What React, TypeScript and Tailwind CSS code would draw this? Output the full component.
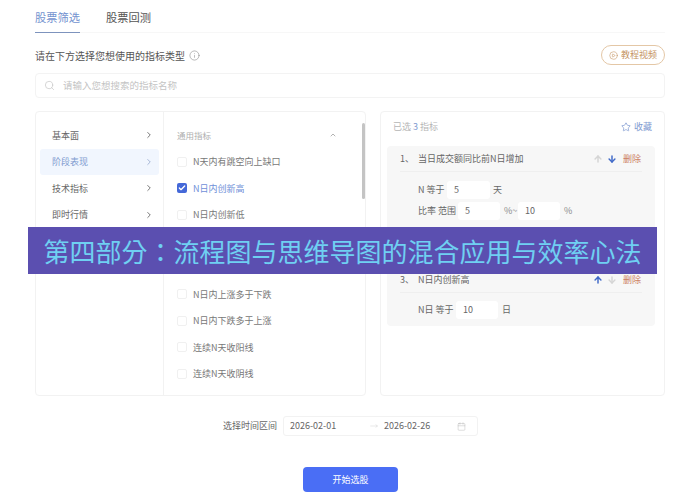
import { ArrowDown, ArrowUp, Calendar, Check, ChevronRight, ChevronUp, CirclePlay, Info, MoveRight, Search, Star } from 'lucide-react';

const categories = ['基本面', '阶段表现', '技术指标', '即时行情'];

const topMetrics = [
  { name: 'N天内有跳空向上缺口', checked: false },
  { name: 'N日内创新高', checked: true },
  { name: 'N日内创新低', checked: false },
];

const bottomMetrics = ['N日内上涨多于下跌', 'N日内下跌多于上涨', '连续N天收阳线', '连续N天收阴线'];

function MetricRow({ name, checked }: { name: string; checked?: boolean }) {
  return (
    <div className="h-[26.5px] flex items-center gap-[6px]">
      {checked ? (
        <span className="w-[10px] h-[10px] rounded-[2px] bg-[#4468d8] flex items-center justify-center">
          <Check size={8} strokeWidth={4} className="text-white" />
        </span>
      ) : (
        <span className="w-[10px] h-[10px] rounded-[2px] border border-[#f0f0f0] bg-white" />
      )}
      <span className={checked ? 'text-[#6f8fd8]' : 'text-[#777777]'}>{name}</span>
    </div>
  );
}

function ValueInput({ value, width }: { value: string; width: string }) {
  return <span className={`${width} h-[18px] rounded-[3px] bg-white pl-[7px] flex items-center text-[#666666]`}>{value}</span>;
}

function CardHeader({ index, title, upActive }: { index: string; title: string; upActive: boolean }) {
  return (
    <div className="h-[25px] mx-[13px] flex items-center border-b border-[#efefef] text-[#666666]">
      <span className="w-[18px]">{index}</span>
      <span>{title}</span>
      <ArrowUp size={10} strokeWidth={3.5} className={`ml-auto ${upActive ? 'text-[#3f69c8]' : 'text-[#d5d5d5]'}`} />
      <ArrowDown size={10} strokeWidth={3.5} className={`ml-[4px] ${upActive ? 'text-[#d5d5d5]' : 'text-[#3f69c8]'}`} />
      <span className="ml-[6px] mr-[1px] text-[#cc8064]">删除</span>
    </div>
  );
}

export default function App() {
  return (
    <div className="relative w-[685px] h-[500px] overflow-hidden bg-white pl-[35px] pr-[20px] text-[9px] font-['Noto_Sans_CJK_SC','Noto_Sans',sans-serif]">
      <div className="h-[33px] flex gap-[26px] border-b border-[#f7f7f7] text-[11.25px]">
        <div className="h-[33px] pt-[9px] border-b border-[#7d93bd] text-[#7392cf]">股票筛选</div>
        <div className="pt-[9px] text-[#555555]">股票回测</div>
      </div>

      <div className="h-[40px] pt-[4px] flex items-center text-[10px] text-[#555555]">
        <span>请在下方选择您想使用的指标类型</span>
        <Info size={11} strokeWidth={1.25} className="ml-[4px] text-[#888888]" />
        <div className="ml-auto w-[64px] h-[20px] rounded-full border border-[#e4c7a6] flex items-center justify-center gap-[3px] text-[9px] text-[#c4935f]">
          <CirclePlay size={9} strokeWidth={1.5} />
          <span>教程视频</span>
        </div>
      </div>

      <div className="h-[25px] rounded-[4px] border border-[#f3f3f3] flex items-center pl-[8px] text-[#c4c4c4]">
        <Search size={11} strokeWidth={1.5} />
        <span className="ml-[8px] text-[9.5px]">请输入您想搜索的指标名称</span>
      </div>

      <div className="mt-[13px] h-[285px] flex gap-[14px]">
        <div className="relative w-[331px] rounded-[4px] border border-[#f2f2f2] flex">
          <div className="w-[128px] border-r border-[#f2f2f2] pt-[10px] px-[4px]">
            {categories.map((category, i) => (
              <div
                key={category}
                className={`h-[26.5px] rounded-[3px] pl-[12px] pr-[5px] flex items-center justify-between ${
                  i === 1 ? 'bg-[#f1f6fe] text-[#7f9bd0]' : 'text-[#666666]'
                }`}
              >
                <span>{category}</span>
                <ChevronRight size={10} strokeWidth={1.75} className={i === 1 ? 'text-[#8a9fc8]' : 'text-[#444444]'} />
              </div>
            ))}
          </div>
          <div className="flex-1 pt-[10px] pl-[13px] pr-[28px]">
            <div className="h-[26.5px] flex items-center justify-between text-[#b0b0b0] text-[8.5px]">
              <span>通用指标</span>
              <ChevronUp size={8} strokeWidth={1.5} className="text-[#666666]" />
            </div>
            {topMetrics.map((metric) => (
              <MetricRow key={metric.name} name={metric.name} checked={metric.checked} />
            ))}
            <div className="h-[53px]" />
            {bottomMetrics.map((name) => (
              <MetricRow key={name} name={name} />
            ))}
          </div>
          <div className="absolute right-[0px] top-[11px] w-[3px] h-[76px] rounded-full bg-[#c4c4c4]" />
        </div>

        <div className="w-[285px] rounded-[4px] border border-[#f2f2f2] pl-[6px] pr-[9px]">
          <div className="h-[34px] pl-[6px] pr-[3px] pb-[4px] flex items-center justify-between">
            <span className="text-[#b5b5b5]">
              已选 <span className="text-[#7f9bd0]">3</span> 指标
            </span>
            <span className="flex items-center gap-[3px] text-[#7f9bd0]">
              <Star size={10} strokeWidth={1.25} className="text-[#4f74c0]" />
              收藏
            </span>
          </div>
          <div className="h-[180px] pt-[1px] rounded-[4px] bg-[#f7f7f7]">
            <CardHeader index="1、" title="当日成交额同比前N日增加" upActive={false} />
            <div className="pl-[31px] pt-[9px] flex flex-col gap-[3px] text-[#666666]">
              <div className="flex items-center">
                <span className="w-[29px]">N 等于</span>
                <ValueInput value="5" width="w-[43px]" />
                <span className="ml-[3px]">天</span>
              </div>
              <div className="flex items-center">
                <span className="w-[40px]">比率 范围</span>
                <ValueInput value="5" width="w-[42px]" />
                <span className="w-[18px] pl-[4px] text-[#888888]">%~</span>
                <ValueInput value="10" width="w-[42px]" />
                <span className="ml-[4px] text-[#888888]">%</span>
              </div>
            </div>
            <div className="h-[48px]" />
            <CardHeader index="3、" title="N日内创新高" upActive />
            <div className="pl-[31px] pt-[8px] flex items-center text-[#666666]">
              <span className="w-[38px]">N日 等于</span>
              <ValueInput value="10" width="w-[42px]" />
              <span className="ml-[4px]">日</span>
            </div>
          </div>
        </div>
      </div>

      <div className="mt-[20px] h-[20px] flex items-center text-[#666666]">
        <span className="ml-[188px] w-[60px]">选择时间区间</span>
        <div className="w-[195px] h-[20px] rounded-[3px] border border-[#f2f2f2] pl-[6px] pr-[11px] flex items-center">
          <span className="w-[80px]">2026-02-01</span>
          <MoveRight size={8} strokeWidth={1} className="text-[#bbbbbb]" />
          <span className="ml-[6px]">2026-02-26</span>
          <Calendar size={9} strokeWidth={1} className="ml-auto text-[#aaaaaa]" />
        </div>
      </div>

      <div className="mt-[31px] ml-[268px] w-[95px] h-[25px] rounded-[4px] bg-[#4a6ef5] flex items-center justify-center text-white">
        开始选股
      </div>

      <div className="absolute left-[28px] top-[227px] w-[629px] h-[47px] bg-[#5b4fb0] flex items-center justify-center text-[26px] text-[#6fd0f2] font-['Noto_Sans_CJK_TC',sans-serif]">
        第四部分：流程图与思维导图的混合应用与效率心法
      </div>
    </div>
  );
}
